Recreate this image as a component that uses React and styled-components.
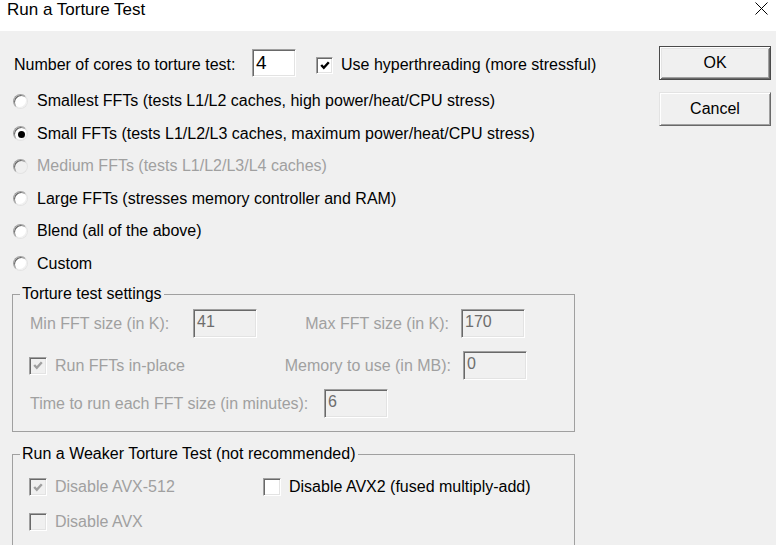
import React from "react";
import styled, { createGlobalStyle, css } from "styled-components";

const GlobalStyle = createGlobalStyle`
  html, body {
    margin: 0;
    padding: 0;
    background: #f0f0f0;
    overflow: hidden;
  }
  body {
    font-family: "Liberation Sans", Arial, sans-serif;
    font-size: 16px;
    color: #000;
  }
  * { box-sizing: border-box; }
`;

const GRAY = "#a0a0a0";

const Window = styled.div`
  width: 776px;
  height: 545px;
  display: flex;
  flex-direction: column;
  overflow: hidden;
  background: #f0f0f0;
`;

const TitleBar = styled.div`
  height: 31px;
  flex: 0 0 31px;
  background: #fff;
  display: flex;
  align-items: flex-start;
  justify-content: space-between;
  padding: 0 8px 0 7px;
`;

const Title = styled.div`
  font-size: 17px;
  line-height: 20px;
  color: #000;
`;

const CloseBox = styled.div`
  width: 13px;
  height: 13px;
  margin-top: 2px;
  display: flex;
`;

const Body = styled.div`
  flex: 1;
  display: flex;
  flex-direction: row;
  min-height: 0;
`;

const LeftPane = styled.div`
  flex: 1;
  display: flex;
  flex-direction: column;
  padding: 18px 0 0 12px;
`;

const ButtonColumn = styled.div`
  display: flex;
  flex-direction: column;
  gap: 12px;
  padding: 15px 5px 0 0;
`;

const Button = styled.button`
  width: 112px;
  height: 34px;
  font-family: "Liberation Sans", Arial, sans-serif;
  font-size: 16px;
  color: #000;
  background: #f0f0f0;
  padding: 0;
  border: 1px solid;
  border-color: #e3e3e3 #696969 #696969 #e3e3e3;
  box-shadow: inset 1px 1px 0 #fff, inset -1px -1px 0 #a0a0a0;
  ${(p) =>
    p.$default &&
    css`
      border-color: #4a4a4a;
      box-shadow: inset 1px 1px 0 #fff, inset -1px -1px 0 #696969,
        inset 2px 2px 0 #e3e3e3, inset -2px -2px 0 #a0a0a0;
    `}
`;

const CoresRow = styled.div`
  display: flex;
  align-items: center;
  height: 28px;
  padding-left: 2px;
`;

const Nudge = styled.span`
  display: inline-flex;
  align-items: center;
  margin-top: 4px;
`;

const Label = styled.span`
  display: inline-block;
  white-space: nowrap;
  line-height: 18px;
  color: ${(p) => (p.$disabled ? GRAY : "#000")};
  ${(p) => p.$width && css`width: ${p.$width}px; flex: 0 0 ${p.$width}px;`}
  ${(p) => p.$right && css`text-align: right;`}
`;

const TextBox = styled.div`
  width: ${(p) => p.$w}px;
  height: ${(p) => p.$h}px;
  flex: 0 0 ${(p) => p.$w}px;
  border: 1px solid;
  border-color: #a0a0a0 #fff #fff #a0a0a0;
  box-shadow: inset 1px 1px 0 #696969, inset -1px -1px 0 #e3e3e3;
  background: ${(p) => (p.$disabled ? "#f0f0f0" : "#fff")};
  color: ${(p) => (p.$disabled ? "#6d6d6d" : "#000")};
  font-size: ${(p) => (p.$big ? 19 : 16)}px;
  line-height: ${(p) => (p.$big ? 22 : 18)}px;
  padding: ${(p) => (p.$big ? "2px 0 0 3px" : "3px 0 0 3px")};
  white-space: nowrap;
`;

const Check = styled.span`
  width: ${(p) => p.$size || 18}px;
  height: ${(p) => p.$size || 18}px;
  flex: 0 0 ${(p) => p.$size || 18}px;
  display: inline-flex;
  align-items: center;
  justify-content: center;
  border: 1px solid;
  border-color: #a0a0a0 #fff #fff #a0a0a0;
  box-shadow: inset 1px 1px 0 #696969, inset -1px -1px 0 #e3e3e3;
  background: ${(p) => (p.$disabled ? "#f0f0f0" : "#fff")};
`;

const CheckMark = ({ color }) => (
  <svg width="10" height="9" viewBox="0 0 10 9">
    <path d="M1.2 4 L3.8 6.8 L8.8 1.2" fill="none" stroke={color} strokeWidth="2.4" />
  </svg>
);

const CheckItem = styled.label`
  display: inline-flex;
  align-items: center;
  gap: 8px;
  height: 18px;
  ${(p) => p.$width && css`width: ${p.$width}px; flex: 0 0 ${p.$width}px;`}
`;

const Checkbox = ({ checked, disabled, label, size, width }) => (
  <CheckItem $width={width}>
    <Check $disabled={disabled} $size={size}>
      {checked && <CheckMark color={disabled ? "#a0a0a0" : "#000"} />}
    </Check>
    <Label $disabled={disabled}>{label}</Label>
  </CheckItem>
);

const RadioList = styled.div`
  display: flex;
  flex-direction: column;
  margin-top: 8px;
  padding-left: 1px;
`;

const RadioRow = styled.label`
  display: flex;
  align-items: center;
  height: 32.5px;
  gap: 9px;
`;

const RadioCircle = styled.span`
  width: 15px;
  height: 15px;
  flex: 0 0 15px;
  border-radius: 50%;
  border: 1px solid;
  border-color: #a0a0a0 #e3e3e3 #e3e3e3 #a0a0a0;
  box-shadow: inset 1px 1px 0 #696969, inset -1px -1px 0 #f0f0f0;
  background: ${(p) => (p.$disabled ? "#f0f0f0" : "#fff")};
  display: inline-flex;
  align-items: center;
  justify-content: center;
  &::after {
    content: "";
    display: ${(p) => (p.$checked ? "block" : "none")};
    width: 7px;
    height: 7px;
    border-radius: 50%;
    background: #000;
    margin: 1px 0 0 1px;
  }
`;

const Radio = ({ checked, disabled, label }) => (
  <RadioRow>
    <RadioCircle $checked={checked} $disabled={disabled} />
    <Label $disabled={disabled}>{label}</Label>
  </RadioRow>
);

const GroupBox = styled.fieldset`
  width: 563px;
  margin: ${(p) => p.$mt}px 0 0 0;
  padding: 0;
  border: 1px solid #a0a0a0;
  min-width: 0;
`;

const GroupTitle = styled.legend`
  margin-left: 7px;
  padding: 0 2px;
  font-size: 16px;
  line-height: 18px;
  color: #000;
`;

const GroupContent = styled.div`
  display: flex;
  flex-direction: column;
  padding: ${(p) => p.$pad};
`;

const FieldRow = styled.div`
  display: flex;
  align-items: center;
  height: ${(p) => p.$h}px;
  margin-top: ${(p) => p.$mt || 0}px;
  padding-left: ${(p) => (p.$pl !== undefined ? p.$pl : 17)}px;
`;

const Spacer = styled.span`
  display: inline-block;
  width: ${(p) => p.$w}px;
  flex: 0 0 ${(p) => p.$w}px;
`;

const CloseIcon = () => (
  <svg width="13" height="13" viewBox="0 0 13 13">
    <path d="M0.5 0.5 L12.5 12.5 M12.5 0.5 L0.5 12.5" stroke="#000" strokeWidth="1" fill="none" />
  </svg>
);

export default function App() {
  return (
    <>
      <GlobalStyle />
      <Window>
        <TitleBar>
          <Title>Run a Torture Test</Title>
          <CloseBox>
            <CloseIcon />
          </CloseBox>
        </TitleBar>
        <Body>
          <LeftPane>
            <CoresRow>
              <Nudge>
                <Label $width={238}>Number of cores to torture test:</Label>
              </Nudge>
              <TextBox $w={44} $h={28} $big>4</TextBox>
              <Spacer $w={20} />
              <Nudge>
                <Checkbox checked size={17} label="Use hyperthreading (more stressful)" />
              </Nudge>
            </CoresRow>
            <RadioList>
              <Radio label="Smallest FFTs (tests L1/L2 caches, high power/heat/CPU stress)" />
              <Radio checked label="Small FFTs (tests L1/L2/L3 caches, maximum power/heat/CPU stress)" />
              <Radio disabled label="Medium FFTs (tests L1/L2/L3/L4 caches)" />
              <Radio label="Large FFTs (stresses memory controller and RAM)" />
              <Radio label="Blend (all of the above)" />
              <Radio label="Custom" />
            </RadioList>
            <GroupBox $mt={5}>
              <GroupTitle>Torture test settings</GroupTitle>
              <GroupContent $pad="6px 0 13px 0">
                <FieldRow $h={29}>
                  <Label $disabled $width={163}>Min FFT size (in K):</Label>
                  <TextBox $disabled $w={64} $h={29}>41</TextBox>
                  <Label $disabled $right $width={192}>Max FFT size (in K):</Label>
                  <Spacer $w={12} />
                  <TextBox $disabled $w={64} $h={29}>170</TextBox>
                </FieldRow>
                <FieldRow $h={29} $mt={13} $pl={16}>
                  <Checkbox checked disabled width={231} label="Run FFTs in-place" />
                  <Label $disabled $right $width={191}>Memory to use (in MB):</Label>
                  <Spacer $w={12} />
                  <TextBox $disabled $w={64} $h={29}>0</TextBox>
                </FieldRow>
                <FieldRow $h={29} $mt={9}>
                  <Label $disabled $width={294}>Time to run each FFT size (in minutes):</Label>
                  <TextBox $disabled $w={64} $h={29}>6</TextBox>
                </FieldRow>
              </GroupContent>
            </GroupBox>
            <GroupBox $mt={13}>
              <GroupTitle>Run a Weaker Torture Test (not recommended)</GroupTitle>
              <GroupContent $pad="15px 0 40px 0">
                <FieldRow $h={18} $pl={16}>
                  <Checkbox checked disabled width={234} label="Disable AVX-512" />
                  <Checkbox label="Disable AVX2 (fused multiply-add)" />
                </FieldRow>
                <FieldRow $h={18} $mt={17} $pl={16}>
                  <Checkbox disabled label="Disable AVX" />
                </FieldRow>
              </GroupContent>
            </GroupBox>
          </LeftPane>
          <ButtonColumn>
            <Button $default>OK</Button>
            <Button>Cancel</Button>
          </ButtonColumn>
        </Body>
      </Window>
    </>
  );
}
